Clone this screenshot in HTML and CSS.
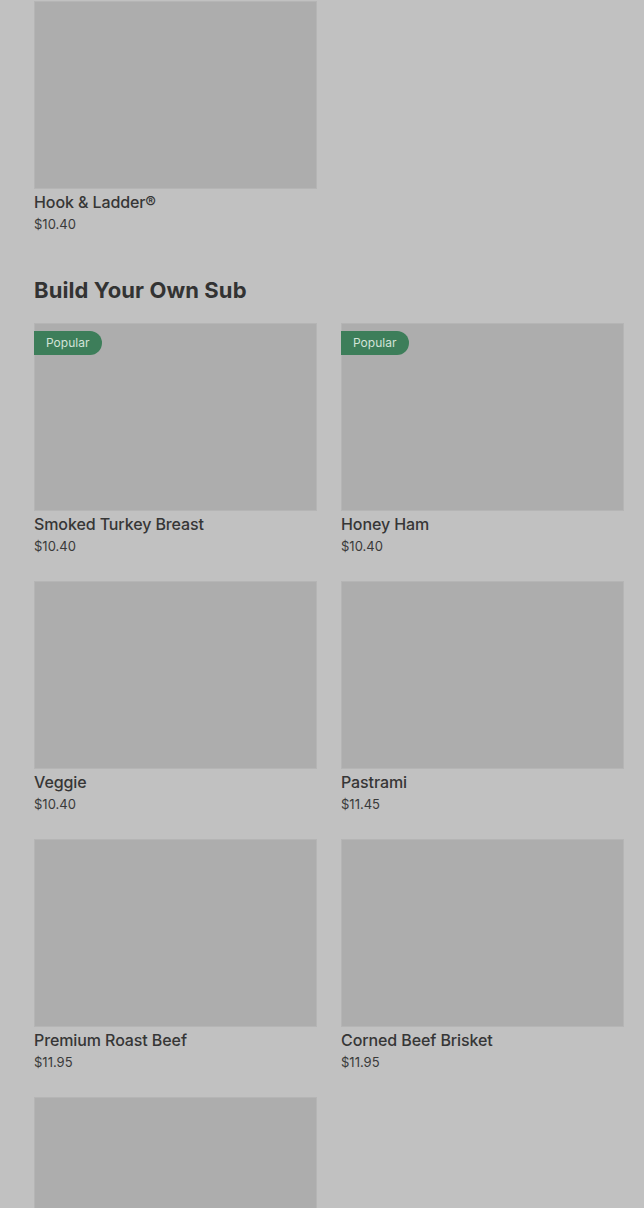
FILE: index.html
```html
<!DOCTYPE html>
<html lang="en">
	<head>
		<meta charset="utf-8">
		<meta name="viewport" content="width=device-width, initial-scale=1.0">
		<title>Menu</title>
		<link rel="stylesheet" href="styles.css">
	</head>
	<body>
		<div class="menu">
			<div class="grid first">
				<div class="item">
					<div class="pic"></div>
					<p class="name">Hook &amp; Ladder&reg;</p>
					<p class="price">$10.40</p>
				</div>
			</div>

			<h2 class="title">Build Your Own Sub</h2>
			<div class="grid">
				<div class="item">
					<div class="pic"><span class="badge">Popular</span></div>
					<p class="name">Smoked Turkey Breast</p>
					<p class="price">$10.40</p>
				</div>
				<div class="item">
					<div class="pic"><span class="badge">Popular</span></div>
					<p class="name">Honey Ham</p>
					<p class="price">$10.40</p>
				</div>
				<div class="item">
					<div class="pic"></div>
					<p class="name">Veggie</p>
					<p class="price">$10.40</p>
				</div>
				<div class="item">
					<div class="pic"></div>
					<p class="name">Pastrami</p>
					<p class="price">$11.45</p>
				</div>
				<div class="item">
					<div class="pic"></div>
					<p class="name">Premium Roast Beef</p>
					<p class="price">$11.95</p>
				</div>
				<div class="item">
					<div class="pic"></div>
					<p class="name">Corned Beef Brisket</p>
					<p class="price">$11.95</p>
				</div>
				<div class="item">
					<div class="pic"></div>
				</div>
			</div>
		</div>
	</body>
</html>
```

FILE: styles.css
```css
*{
	margin: 0;
	padding: 0;
	box-sizing: border-box;
}
html,
body{
	height: 100%;
	overflow: hidden;
}
body{
	background: #c1c1c1;
	font-family: Inter, "Liberation Sans", sans-serif;
	color: #363636;
}
.menu{
	padding: 1px 20px 0 34px;
}
.grid{
	display: grid;
	grid-template-columns: 283px 283px;
	column-gap: 24px;
	row-gap: 24px;
}
.item{
	display: flex;
	flex-direction: column;
}
/* 图片占位 */
.pic{
	position: relative;
	height: 188px;
	background: #adadad;
	box-shadow: 0 0 0 1px #b5b5b5 inset;
}
.badge{
	position: absolute;
	top: 8px;
	left: 0;
	height: 24px;
	line-height: 24px;
	padding: 0 13px 0 12px;
	font-size: 12px;
	color: #d3e3d8;
	background: #3d7e5a;
	border-radius: 0 12px 12px 0;
}
.name{
	margin-top: 2px;
	font-size: 16px;
	line-height: 22px;
	font-weight: 500;
	letter-spacing: -0.1px;
}
.price{
	font-size: 13px;
	line-height: 21px;
	padding-top: 1px;
	color: #3a3a3a;
}
.title{
	margin: 41px 0 19px;
	font-size: 22px;
	line-height: 28px;
	font-weight: 700;
	letter-spacing: 0.1px;
	color: #333;
}
```
